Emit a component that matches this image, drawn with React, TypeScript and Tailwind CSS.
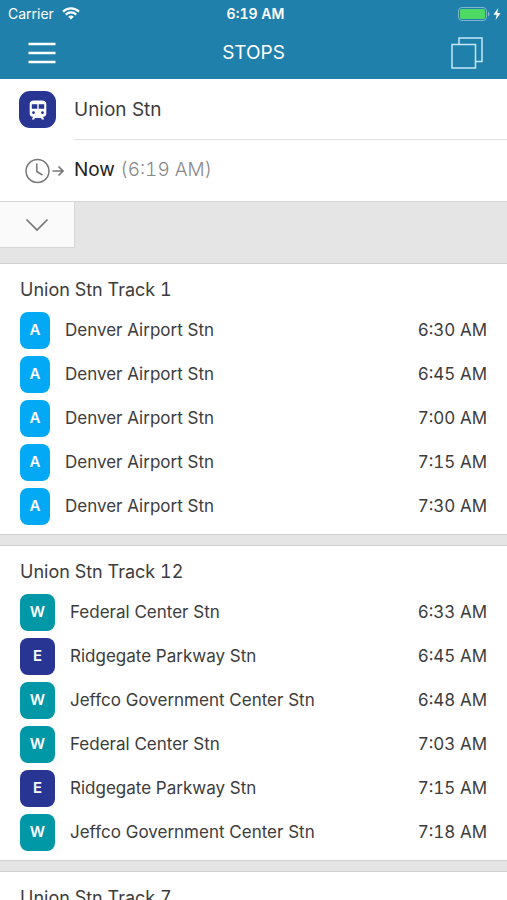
import React from "react";
import clsx from "clsx";

type Line = "A" | "W" | "E";

type Departure = {
  line: Line;
  destination: string;
  time: string;
};

type Track = {
  name: string;
  badgeWidth: string;
  departures: Departure[];
};

const LINE_COLORS: Record<Line, string> = {
  A: "bg-[#03a9f4]",
  W: "bg-[#0097a7]",
  E: "bg-[#283593]",
};

const TRACKS: Track[] = [
  {
    name: "Union Stn Track 1",
    badgeWidth: "w-[30px]",
    departures: [
      { line: "A", destination: "Denver Airport Stn", time: "6:30 AM" },
      { line: "A", destination: "Denver Airport Stn", time: "6:45 AM" },
      { line: "A", destination: "Denver Airport Stn", time: "7:00 AM" },
      { line: "A", destination: "Denver Airport Stn", time: "7:15 AM" },
      { line: "A", destination: "Denver Airport Stn", time: "7:30 AM" },
    ],
  },
  {
    name: "Union Stn Track 12",
    badgeWidth: "w-[35px]",
    departures: [
      { line: "W", destination: "Federal Center Stn", time: "6:33 AM" },
      { line: "E", destination: "Ridgegate Parkway Stn", time: "6:45 AM" },
      { line: "W", destination: "Jeffco Government Center Stn", time: "6:48 AM" },
      { line: "W", destination: "Federal Center Stn", time: "7:03 AM" },
      { line: "E", destination: "Ridgegate Parkway Stn", time: "7:15 AM" },
      { line: "W", destination: "Jeffco Government Center Stn", time: "7:18 AM" },
    ],
  },
  { name: "Union Stn Track 7", badgeWidth: "w-[30px]", departures: [] },
];

function WifiIcon() {
  return (
    <svg width="18" height="13" viewBox="0 0 18 13" fill="none" stroke="currentColor" strokeWidth="2.2" aria-hidden="true">
      <path d="M1 4.6a11.4 11.4 0 0 1 16 0" />
      <path d="M3.8 7.6a7.4 7.4 0 0 1 10.4 0" />
      <path d="M9 12.6 6.2 9.8a4 4 0 0 1 5.6 0z" fill="currentColor" stroke="none" />
    </svg>
  );
}

function BatteryIcon() {
  return (
    <svg width="46" height="16" viewBox="0 0 46 16" aria-hidden="true">
      <rect x="1.5" y="1.5" width="28" height="13" rx="3.5" fill="none" stroke="#7fb6d0" />
      <rect x="3" y="3" width="25" height="10" rx="1.5" fill="#4cd964" />
      <path d="M31 5.6a2.6 2.6 0 0 1 0 4.8z" fill="#7fb6d0" />
      <path d="M41.2 2 36.4 8.8h3.2L38.6 14l5-7h-3.3z" fill="#fff" />
    </svg>
  );
}

function TrainIcon() {
  return (
    <svg width="20" height="22" viewBox="0 0 20 22" fill="#fff" aria-hidden="true">
      <path
        fillRule="evenodd"
        d="M6 1.500h8c2.800 0 4.300 1.300 4.300 3.300v9.900c0 1.900-1.300 3-3 3H4.700c-1.700 0-3-1.100-3-3V4.800C1.700 2.800 3.200 1.500 6 1.500zM3.800 5.300v4.500h5.500V5.300zm6.900 0v4.500h5.500V5.300zM5.500 12.300a1.400 1.400 0 1 0 0 2.800 1.400 1.400 0 0 0 0-2.800zm9 0a1.400 1.400 0 1 0 0 2.800 1.400 1.400 0 0 0 0-2.800z"
      />
      <path d="M5.300 17.200 3.800 20.400h2.400l.7-1.400h6.200l.7 1.400h2.400l-1.500-3.200z" />
    </svg>
  );
}

function ClockArrowIcon() {
  return (
    <svg width="40" height="26" viewBox="0 0 40 26" fill="none" stroke="#777" strokeWidth="1.5" aria-hidden="true">
      <circle cx="13.5" cy="13" r="11.5" />
      <path d="M12.8 5.500v8l5.700 3.500" />
      <path d="M28.500 13h10.500M34.500 8.500 39 13l-4.500 4.500" strokeWidth="1.7" />
    </svg>
  );
}

function StatusBar() {
  return (
    <div className="grid h-[27px] grid-cols-3 items-center pl-2 pr-1 text-sm">
      <span className="flex items-center gap-2">
        Carrier
        <WifiIcon />
      </span>
      <span className="text-center font-semibold tabular-nums">6:19 AM</span>
      <span className="flex justify-end">
        <BatteryIcon />
      </span>
    </div>
  );
}

function DepartureRow({ departure, badgeWidth }: { departure: Departure; badgeWidth: string }) {
  return (
    <li className="flex h-11 items-center">
      <span
        className={clsx(
          "flex h-[37px] shrink-0 items-center justify-center rounded-lg text-[15px] font-semibold text-white",
          badgeWidth,
          LINE_COLORS[departure.line]
        )}
      >
        {departure.line}
      </span>
      <span className="ml-[15px] flex-1 truncate pt-0.5">{departure.destination}</span>
      <time className="pt-0.5 tabular-nums">{departure.time}</time>
    </li>
  );
}

export default function App() {
  return (
    <div className="flex h-screen flex-col overflow-hidden bg-[#e5e5e5] font-['Inter',sans-serif] text-[#3c3c3c]">
      <header className="shrink-0 bg-[#1f80ab] text-white">
        <StatusBar />
        <div className="flex h-[52px] items-center justify-between px-6">
          <button type="button" aria-label="Menu" className="flex h-11 w-9 items-center justify-center">
            <svg width="28" height="22" viewBox="0 0 28 22" stroke="#fff" strokeWidth="2.3" aria-hidden="true">
              <path d="M.5 2h27M.5 11h27M.5 20h27" />
            </svg>
          </button>
          <h1 className="text-[19px]">STOPS</h1>
          <button type="button" aria-label="Duplicate" className="flex h-11 w-9 items-center justify-end">
            <svg width="32" height="32" viewBox="0 0 32 32" fill="none" stroke="#c5e8f8" strokeWidth="1.5" aria-hidden="true">
              <path d="M1 7.500h23.500V31H1z" />
              <path d="M8 7.500V1h23v23.500h-6.500" />
            </svg>
          </button>
        </div>
      </header>

      <main className="min-h-0 flex-1 overflow-y-auto [scrollbar-width:none]">
        <div className="border-b border-[#d6d6d6] bg-white text-[19px]">
          <div className="flex items-center pl-[19px]">
            <span className="flex size-[37px] shrink-0 items-center justify-center rounded-[11px] bg-[#283593]">
              <TrainIcon />
            </span>
            <span className="ml-[18px] flex h-[61px] flex-1 items-center border-b border-[#e0e0e0] pt-0.5">
              Union Stn
            </span>
          </div>
          <div className="flex h-[61px] items-center pl-6">
            <ClockArrowIcon />
            <span className="ml-[10px]">
              <span className="text-[#222]">Now</span>{" "}
              <span className="font-light tabular-nums text-[#888]">(6:19 AM)</span>
            </span>
          </div>
        </div>

        <div className="h-[61px]">
          <button
            type="button"
            aria-label="Show more options"
            className="flex h-[46px] w-[75px] items-center justify-center border-r border-b border-[#d6d6d6] bg-[#fafafa]"
          >
            <svg width="24" height="14" viewBox="0 0 24 14" fill="none" stroke="#777" strokeWidth="1.7" aria-hidden="true">
              <path d="m1.500 1.500 10.500 10.500 10.500-10.500" />
            </svg>
          </button>
        </div>

        <div className="flex flex-col gap-[10px]">
          {TRACKS.map((track) => (
            <section key={track.name} className="border-y border-[#cfcfcf] bg-white px-5 pb-[6px]">
              <h2 className="flex h-11 items-center pt-2 text-lg tabular-nums">{track.name}</h2>
              <ul className="text-[17px]">
                {track.departures.map((departure) => (
                  <DepartureRow key={departure.time} departure={departure} badgeWidth={track.badgeWidth} />
                ))}
              </ul>
            </section>
          ))}
        </div>
      </main>
    </div>
  );
}
